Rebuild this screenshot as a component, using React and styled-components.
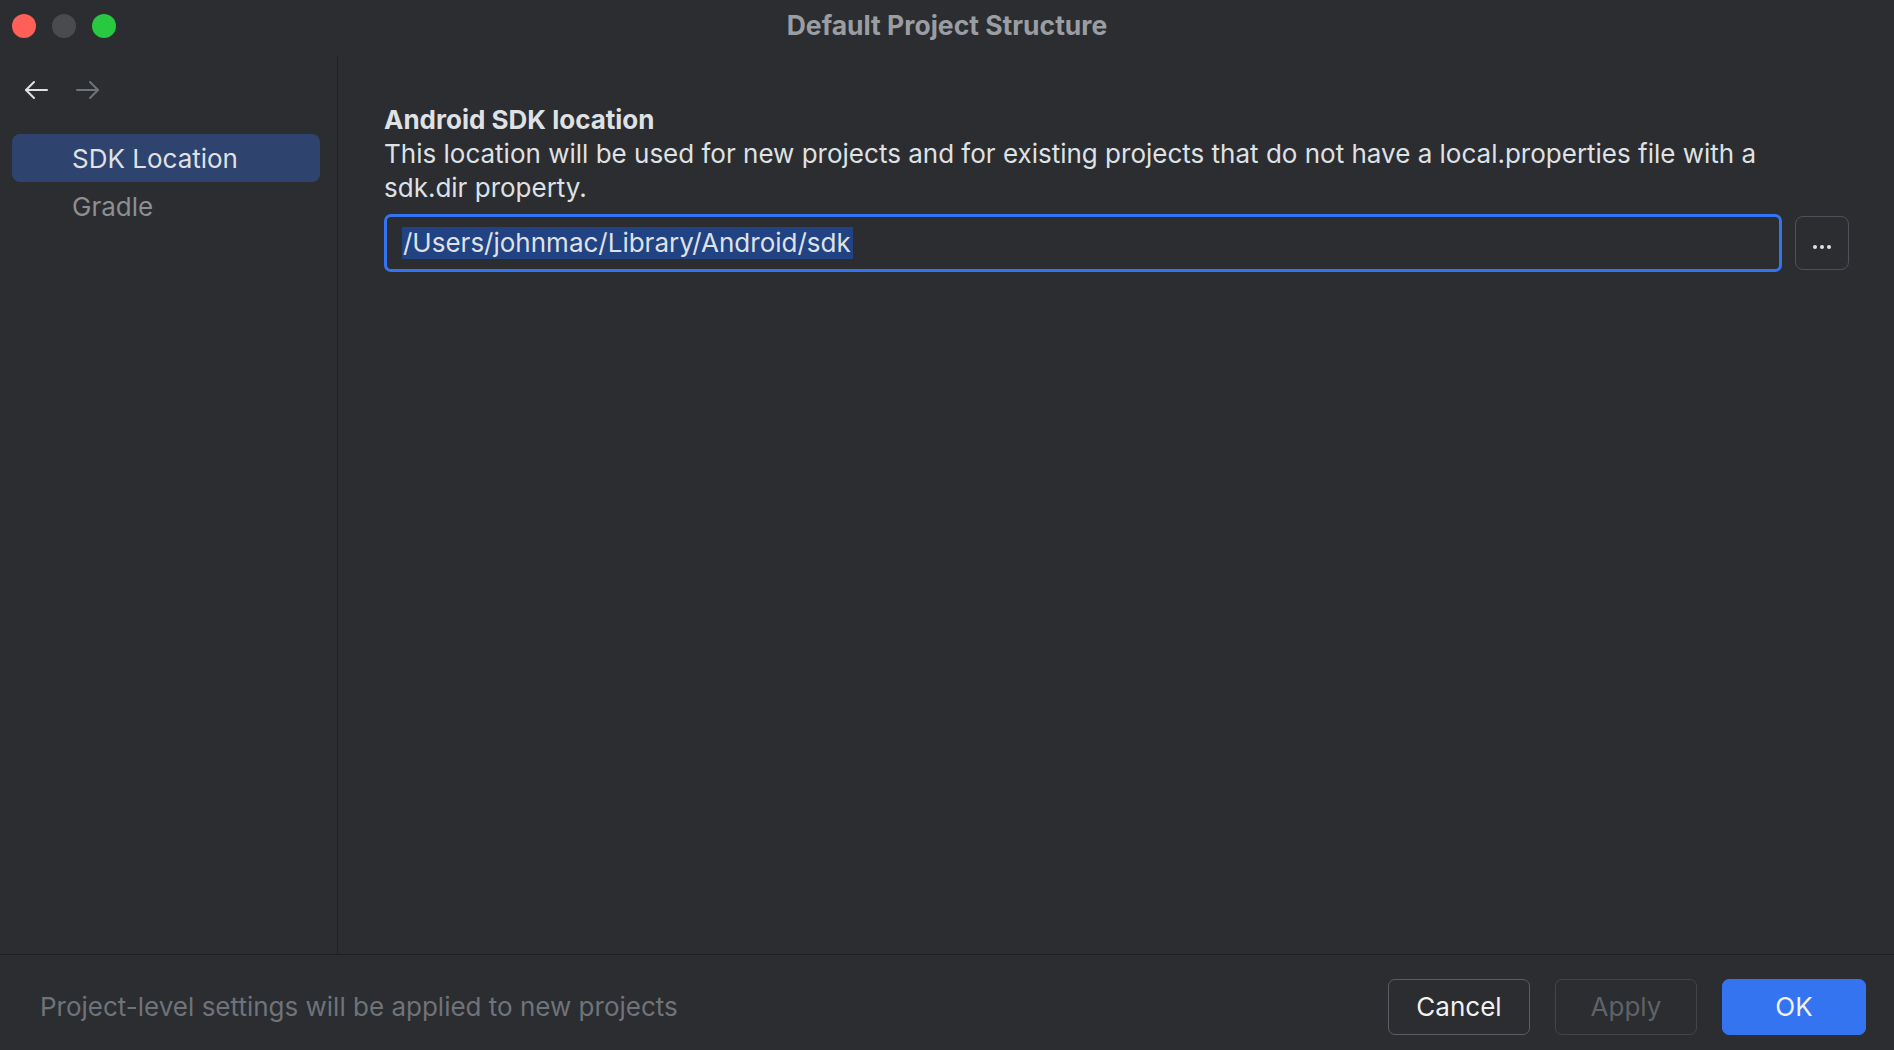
import React from "react";
import styled, { createGlobalStyle } from "styled-components";

const Global = createGlobalStyle`
  html, body { margin: 0; padding: 0; background: #2b2d30; }
  body { font-family: Inter, "Noto Sans", "Liberation Sans", sans-serif; -webkit-font-smoothing: antialiased; }
  * { box-sizing: border-box; }
`;

const Window = styled.div`
  width: 1894px;
  height: 1050px;
  background: #2b2d30;
  display: flex;
  flex-direction: column;
  overflow: hidden;
`;

const TitleBar = styled.div`
  height: 56px;
  flex: none;
  display: grid;
  grid-template-columns: 1fr auto 1fr;
  align-items: start;
`;

const Lights = styled.div`
  display: flex;
  gap: 16px;
  padding: 14px 0 0 12px;
`;

const Light = styled.span`
  width: 24px;
  height: 24px;
  border-radius: 50%;
  background: ${(p) => p.$color};
`;

const Title = styled.div`
  line-height: 50px;
  font-size: 26.5px;
  font-weight: 700;
  color: #9a9da2;
`;

const Body = styled.div`
  flex: 1;
  display: flex;
  min-height: 0;
  border-bottom: 1px solid #1e1f22;
`;

const Sidebar = styled.div`
  width: 338px;
  flex: none;
  border-right: 1px solid #1e1f22;
  padding: 20px 17px 0 12px;
  display: flex;
  flex-direction: column;
`;

const NavRow = styled.div`
  height: 28px;
  display: flex;
  align-items: center;
  gap: 28px;
  padding-left: 12px;
  margin-bottom: 30px;
`;

const NavItem = styled.div`
  height: 48px;
  border-radius: 8px;
  display: flex;
  align-items: center;
  padding-left: 60px;
  font-size: 26px;
  color: ${(p) => (p.$active ? "#dfe1e5" : "#8c8f94")};
  background: ${(p) => (p.$active ? "#2e436e" : "transparent")};
`;

const Main = styled.div`
  flex: 1;
  padding: 47px 45px 0 46px;
  display: flex;
  flex-direction: column;
`;

const Heading = styled.div`
  font-size: 26px;
  line-height: 34px;
  font-weight: 700;
  color: #dfe1e5;
`;

const Desc = styled.div`
  font-size: 26px;
  line-height: 34px;
  color: #dfe1e5;
`;

const FieldRow = styled.div`
  margin-top: 9px;
  display: flex;
  align-items: center;
  gap: 13px;
`;

const Input = styled.div`
  flex: 1;
  height: 58px;
  border: 3px solid #3574f0;
  border-radius: 7px;
  padding-left: 15px;
  display: flex;
  align-items: center;
  background: #2b2d30;
`;

const Selected = styled.span`
  background: #214283;
  color: #dfe1e5;
  font-size: 26px;
  line-height: 32px;
  padding: 0 2px 0 1px;
`;

const Browse = styled.div`
  width: 54px;
  height: 54px;
  border: 1px solid #4e5157;
  border-radius: 8px;
  display: flex;
  align-items: center;
  justify-content: center;
  gap: 3px;
  padding-top: 8px;
`;

const Dot = styled.span`
  width: 4px;
  height: 4px;
  border-radius: 50%;
  background: #dfe1e5;
`;

const Footer = styled.div`
  height: 95px;
  flex: none;
  display: flex;
  align-items: center;
  padding: 8px 28px 0 40px;
`;

const FooterText = styled.div`
  flex: 1;
  font-size: 26px;
  color: #6f737a;
`;

const Buttons = styled.div`
  display: flex;
  gap: 25px;
`;

const Button = styled.div`
  width: ${(p) => (p.$primary ? 144 : 142)}px;
  height: 56px;
  border-radius: 7px;
  display: flex;
  align-items: center;
  justify-content: center;
  font-size: 26px;
  border: 1px solid ${(p) => (p.$primary ? "#3574f0" : p.$disabled ? "#43454a" : "#5a5d63")};
  background: ${(p) => (p.$primary ? "#3574f0" : "transparent")};
  color: ${(p) => (p.$disabled ? "#5f6268" : "#f0f1f2")};
`;

const Arrow = ({ color, dir }) => (
  <svg width="24" height="20" viewBox="0 0 24 20" fill="none" stroke={color} strokeWidth="2" strokeLinecap="round" strokeLinejoin="round">
    {dir === "left" ? (
      <>
        <path d="M23 10H2" />
        <path d="M10 2L2 10l8 8" />
      </>
    ) : (
      <>
        <path d="M1 10h21" />
        <path d="M14 2l8 8-8 8" />
      </>
    )}
  </svg>
);

export default function App() {
  return (
    <>
      <Global />
      <Window>
        <TitleBar>
          <Lights>
            <Light $color="#fe5f57" />
            <Light $color="#4a4b4e" />
            <Light $color="#28c840" />
          </Lights>
          <Title>Default Project Structure</Title>
          <div />
        </TitleBar>
        <Body>
          <Sidebar>
            <NavRow>
              <Arrow color="#dfe1e5" dir="left" />
              <Arrow color="#6f737a" dir="right" />
            </NavRow>
            <NavItem $active>SDK Location</NavItem>
            <NavItem>Gradle</NavItem>
          </Sidebar>
          <Main>
            <Heading>Android SDK location</Heading>
            <Desc>
              This location will be used for new projects and for existing projects that do not have a local.properties file with a
              <br />
              sdk.dir property.
            </Desc>
            <FieldRow>
              <Input>
                <Selected>/Users/johnmac/Library/Android/sdk</Selected>
              </Input>
              <Browse>
                <Dot />
                <Dot />
                <Dot />
              </Browse>
            </FieldRow>
          </Main>
        </Body>
        <Footer>
          <FooterText>Project-level settings will be applied to new projects</FooterText>
          <Buttons>
            <Button>Cancel</Button>
            <Button $disabled>Apply</Button>
            <Button $primary>OK</Button>
          </Buttons>
        </Footer>
      </Window>
    </>
  );
}
